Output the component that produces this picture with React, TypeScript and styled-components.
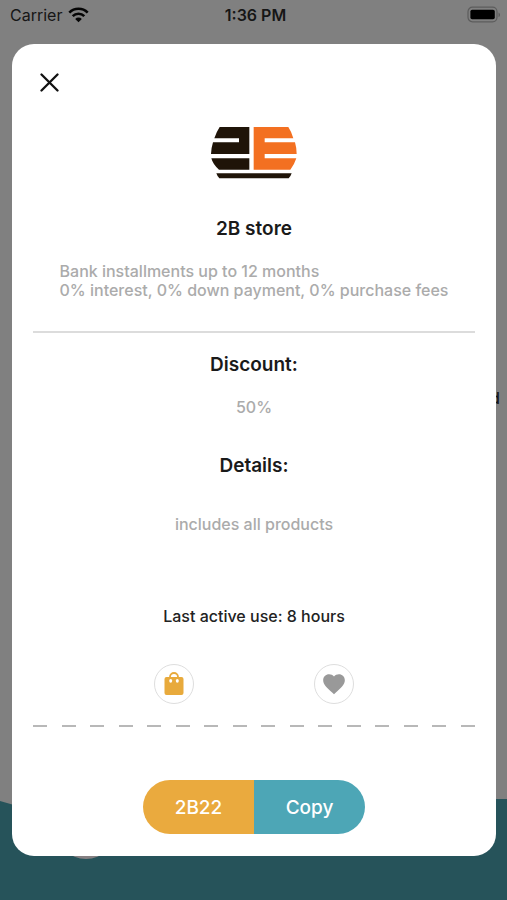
import React from "react";
import styled, { createGlobalStyle } from "styled-components";

const GlobalStyle = createGlobalStyle`
  * { box-sizing: border-box; }
  body {
    margin: 0;
    background: #808080;
    font-family: Inter, "Liberation Sans", sans-serif;
  }
  h1, h2, p { margin: 0; }
  button { font: inherit; border: 0; padding: 0; cursor: pointer; }
`;

const Screen = styled.div`
  position: relative;
  min-height: 100vh;
  display: flex;
  flex-direction: column;
  overflow: hidden;
  background: #808080;
`;

const StatusBar = styled.header`
  display: grid;
  grid-template-columns: 1fr auto 1fr;
  align-items: center;
  height: 30px;
  padding: 0 6px 0 10px;
  color: #161616;
  font-size: 16px;
`;

const Carrier = styled.span`
  display: flex;
  align-items: center;
  gap: 6px;
`;

const Clock = styled.time`
  font-weight: 600;
`;

const Battery = styled.svg`
  justify-self: end;
`;

const Backdrop = styled.main`
  flex: 1;
  display: flex;
  align-items: center;
  justify-content: flex-end;
  padding: 0 7px 34px;
  color: #161616;
  font-size: 16px;
  font-weight: 500;
`;

const BottomBar = styled.footer`
  height: 101px;
  background: #26535a;
  clip-path: polygon(
    0 2px, 14px 6px, 40px 32px, 130px 32px, 156px 0,
    100% 0, 100% 100%, 0 100%
  );
`;

const NavBubble = styled.span`
  display: block;
  width: 60px;
  height: 60px;
  margin-left: 56px;
  border-radius: 50%;
  background: #858082;
`;

const Overlay = styled.div`
  position: absolute;
  inset: 0;
  display: flex;
  padding: 44px 11px 44px 12px;
`;

const Card = styled.section`
  flex: 1;
  display: flex;
  flex-direction: column;
  align-items: center;
  padding: 26px 21px 22px;
  border-radius: 22px;
  background: #fff;
`;

const CloseButton = styled.button`
  align-self: flex-start;
  width: 32px;
  height: 26px;
  display: grid;
  place-items: center;
  background: none;
  color: #111;
`;

const Logo = styled.svg`
  margin-top: 30px;
`;

const Title = styled.h1`
  margin-top: 37px;
  font-size: 19px;
  line-height: 24px;
  font-weight: 600;
  color: #1a1a1a;
`;

const Heading = styled.h2<{ $gap: number }>`
  margin-top: ${(p) => p.$gap}px;
  font-size: 19px;
  line-height: 24px;
  font-weight: 600;
  color: #1a1a1a;
`;

const Muted = styled.p<{ $gap: number }>`
  margin-top: ${(p) => p.$gap}px;
  font-size: 16px;
  line-height: 19px;
  font-weight: 500;
  color: #ababab;
  white-space: pre-line;
`;

const Divider = styled.hr`
  width: 100%;
  height: 2px;
  margin: 31px 0 0;
  border: 0;
  background: #dcdcdc;
`;

const LastUse = styled.p`
  margin-top: 72px;
  font-size: 16px;
  line-height: 20px;
  font-weight: 500;
  color: #222;
`;

const Actions = styled.div`
  display: flex;
  gap: 120px;
  margin-top: 38px;
`;

const RoundButton = styled.button<{ $color: string }>`
  width: 40px;
  height: 40px;
  display: grid;
  place-items: center;
  border: 1px solid #dedede;
  border-radius: 50%;
  background: #fff;
  color: ${(p) => p.$color};
`;

const DashedLine = styled.div`
  width: 100%;
  display: flex;
  justify-content: space-between;
  margin-top: 21px;
`;

const Dash = styled.span`
  width: 14px;
  height: 2px;
  background: #b8b8b8;
`;

const CodePill = styled.div`
  display: flex;
  width: 222px;
  height: 54px;
  margin-top: auto;
  border-radius: 27px;
  overflow: hidden;
`;

const Code = styled.span`
  flex: 1;
  display: grid;
  place-items: center;
  background: #eaaa3e;
  color: #fff;
  font-size: 19px;
  font-weight: 500;
`;

const CopyButton = styled.button`
  flex: 1;
  background: #4da6b6;
  color: #fff;
  font-size: 19px;
  font-weight: 500;
`;

const DISCOUNT_CODE = "2B22";
const DASH_COUNT = 16;

export default function App() {
  const copyCode = () => {
    navigator.clipboard?.writeText(DISCOUNT_CODE);
  };

  return (
    <>
      <GlobalStyle />
      <Screen>
        <StatusBar>
          <Carrier>
            Carrier
            <svg width="21" height="16" viewBox="0 0 21 16" aria-label="Wi-Fi">
              <g fill="none" stroke="#050505" strokeWidth="2.6">
                <path d="M1.3 5.6a13 13 0 0 1 18.4 0" />
                <path d="M4.7 9.2a8.2 8.2 0 0 1 11.6 0" />
              </g>
              <path d="M7.2 11.9a4.7 4.7 0 0 1 6.6 0L10.5 15.3Z" fill="#050505" />
            </svg>
          </Carrier>
          <Clock>1:36 PM</Clock>
          <Battery width="34" height="18" viewBox="0 0 34 18" aria-label="Battery full">
            <rect x="1" y="1.2" width="29" height="14.6" rx="4.5" fill="none" stroke="#5c5c5c" strokeWidth="1.2" />
            <rect x="3.4" y="3.7" width="24.4" height="9.6" rx="1.8" fill="#000" />
            <path d="M31.5 6.4c2 .8 2 3.8 0 4.6Z" fill="#5c5c5c" />
          </Battery>
        </StatusBar>

        <Backdrop>d</Backdrop>

        <BottomBar>
          <NavBubble />
        </BottomBar>

        <Overlay>
          <Card role="dialog" aria-modal="true" aria-labelledby="store-name">
            <CloseButton type="button" aria-label="Close">
              <svg width="20" height="20" viewBox="0 0 20 20">
                <path
                  d="M2.5 1.5 18.5 17.5M18.5 1.5 2.5 17.5"
                  stroke="currentColor"
                  strokeWidth="2.3"
                  strokeLinecap="round"
                />
              </svg>
            </CloseButton>

            <Logo width="88" height="54" viewBox="0 0 264 162" role="img" aria-label="2B logo">
              <path
                fill="#1f1408"
                d="M29 3H118V84H3Q4 65 9 49H87V37H13Q19 18 29 3ZM4 97H118V131H27Q9 116 4 97Z"
              />
              <path
                fill="#f37021"
                d="M131 3H235Q245 18 250 37H164V49H255Q260 66 260 84H164V97H259Q253 116 241 131H131Z"
              />
              <path fill="#1f1408" d="M19 142H245Q242 151 236 157H28Q22 151 19 142Z" />
            </Logo>

            <Title id="store-name">2B store</Title>
            <Muted $gap={21}>
              {"Bank installments up to 12 months\n0% interest, 0% down payment, 0% purchase fees"}
            </Muted>
            <Divider />

            <Heading $gap={20}>Discount:</Heading>
            <Muted $gap={21}>50%</Muted>
            <Heading $gap={37}>Details:</Heading>
            <Muted $gap={37}>includes all products</Muted>

            <LastUse>Last active use: 8 hours</LastUse>
            <Actions>
              <RoundButton type="button" aria-label="Shop" $color="#e8aa3c">
                <svg width="20" height="24" viewBox="0 0 20 24">
                  <path d="M6 5.5V5a4 4 0 0 1 8 0v.5" fill="none" stroke="currentColor" strokeWidth="1.8" />
                  <path
                    fill="currentColor"
                    d="M2.5 5h15a2 2 0 0 1 2 2v14a2 2 0 0 1-2 2h-15a2 2 0 0 1-2-2V7a2 2 0 0 1 2-2Z"
                  />
                  <ellipse cx="6.7" cy="8.8" rx="1.5" ry="1.9" fill="#fff" />
                  <ellipse cx="13.3" cy="8.8" rx="1.5" ry="1.9" fill="#fff" />
                </svg>
              </RoundButton>
              <RoundButton type="button" aria-label="Add to favourites" $color="#999">
                <svg width="26" height="26" viewBox="0 0 24 24">
                  <path
                    fill="currentColor"
                    d="m12 21.35-1.45-1.32C5.4 15.36 2 12.28 2 8.5 2 5.42 4.42 3 7.5 3c1.74 0 3.41.81 4.5 2.09C13.09 3.81 14.76 3 16.5 3 19.58 3 22 5.42 22 8.5c0 3.78-3.4 6.86-8.55 11.54z"
                  />
                </svg>
              </RoundButton>
            </Actions>
            <DashedLine>
              {Array.from({ length: DASH_COUNT }, (_, i) => (
                <Dash key={i} />
              ))}
            </DashedLine>

            <CodePill>
              <Code>{DISCOUNT_CODE}</Code>
              <CopyButton type="button" onClick={copyCode}>
                Copy
              </CopyButton>
            </CodePill>
          </Card>
        </Overlay>
      </Screen>
    </>
  );
}
